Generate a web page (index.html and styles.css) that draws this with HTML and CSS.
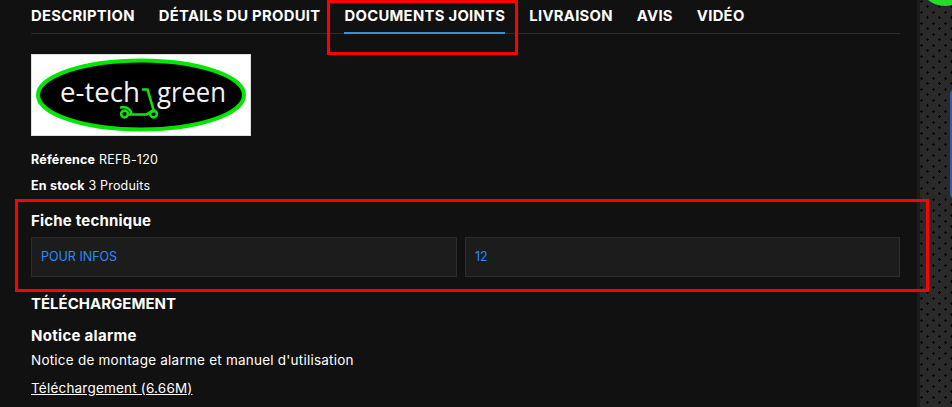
FILE: index.html

```html
<!DOCTYPE html>
<html lang="fr">
<head>
    <meta charset="UTF-8">
    <meta name="viewport" content="width=device-width, initial-scale=1.0">
    <title>Documents joints</title>
    <link rel="stylesheet" href="styles.css">
</head>
<body>
    <div id="page">
        <div id="product">
            <!-- Onglets -->
            <div class="tabs">
                <a class="tab">DESCRIPTION</a>
                <a class="tab">DÉTAILS DU PRODUIT</a>
                <a class="tab active">DOCUMENTS JOINTS</a>
                <a class="tab">LIVRAISON</a>
                <a class="tab">AVIS</a>
                <a class="tab">VIDÉO</a>
            </div>

            <!-- Logo marque -->
            <svg class="logo" viewBox="0 0 220 82" role="img" aria-label="e-tech green">
                <rect x="0.5" y="0.5" width="219" height="81" fill="#fff" stroke="#ddd"/>
                <ellipse cx="110" cy="41" rx="103" ry="34.5" fill="#000" stroke="#00e600" stroke-width="4"/>
                <text x="29" y="48" class="logo-text" textLength="80" lengthAdjust="spacingAndGlyphs">e-tech</text>
                <text x="126" y="48" class="logo-text" textLength="69" lengthAdjust="spacingAndGlyphs">green</text>
                <g fill="none" stroke="#14e014" stroke-width="2.6" stroke-linecap="round">
                    <path d="M112 35.5h4.5l6.5 22"/>
                    <path d="M97 60.5h18.5l7-4"/>
                    <circle cx="122.5" cy="60" r="3.4"/>
                    <circle cx="93.5" cy="60" r="3.4"/>
                    <path d="M90 53.5c5-1.5 10 2 10.5 6.5"/>
                </g>
            </svg>

            <div class="info"><b>Référence</b> REFB-120</div>
            <div class="info"><b>En stock</b> 3 Produits</div>

            <!-- Fiche technique -->
            <h3 class="sheet-title">Fiche technique</h3>
            <div class="sheet">
                <div class="sheet-cell">POUR INFOS</div>
                <div class="sheet-cell">12</div>
            </div>

            <!-- Téléchargement -->
            <h2 class="download-title">TÉLÉCHARGEMENT</h2>
            <h3 class="notice-title">Notice alarme</h3>
            <p class="notice-text">Notice de montage alarme et manuel d'utilisation</p>
            <a class="download-link">Téléchargement (6.66M)</a>
        </div>

        <div id="side">
            <span class="side-badge"></span>
            <span class="side-tab"></span>
        </div>

        <!-- Cadres rouges d'annotation -->
        <div class="mark mark-tab"></div>
        <div class="mark mark-sheet"></div>
    </div>
</body>
</html>
```

FILE: styles.css

```css
/* Page */
html, body {
    margin: 0;
    padding: 0;
    height: 100%;
    overflow: hidden;
    background-color: #111;
}

#page {
    position: relative;
    display: flex;
    height: 407px;
    font-family: Inter, "Liberation Sans", sans-serif;
    color: #fff;
}

#product {
    width: 869px;
    padding: 0 17px 0 31px;
    background-color: #111;
    overflow: hidden;
}

/* Onglets */
.tabs {
    display: flex;
    gap: 24px;
    height: 33px;
    border-bottom: 1px solid #2d2d2d;
}

.tab {
    margin-bottom: -1px;
    font-size: 14.8px;
    font-weight: 700;
    letter-spacing: 0.3px;
    line-height: 33px;
    white-space: nowrap;
}

.tab.active {
    border-bottom: 2px solid #3a8fd6;
    height: 32px;
}

/* Logo */
.logo {
    display: block;
    width: 220px;
    height: 82px;
    margin-top: 20px;
}

.logo-text {
    font-family: "Open Sans", sans-serif;
    font-size: 27px;
    fill: #f2f2f2;
}

.info {
    margin-top: 8px;
    font-size: 12.5px;
    letter-spacing: 0.2px;
    line-height: 18px;
}

.logo + .info {
    margin-top: 15px;
}

.info b {
    font-weight: 700;
}

/* Fiche technique */
.sheet-title {
    margin: 16px 0 0;
    font-size: 15px;
    font-weight: 700;
    letter-spacing: 0.2px;
    line-height: 20px;
}

.sheet {
    display: grid;
    grid-template-columns: 426px 1fr;
    gap: 8px;
    margin-top: 6px;
}

.sheet-cell {
    height: 38px;
    padding: 0 9px;
    background-color: #1c1c1c;
    border: 1px solid #2d2d2d;
    color: #2b8aff;
    font-size: 12.5px;
    line-height: 38px;
}

/* Téléchargement */
.download-title {
    margin: 17px 0 0;
    font-size: 15px;
    font-weight: 700;
    line-height: 20px;
}

.notice-title {
    margin: 12px 0 0;
    font-size: 15px;
    font-weight: 700;
    letter-spacing: 0.3px;
    line-height: 20px;
}

.notice-text {
    margin: 5px 0 0;
    font-size: 13.5px;
    letter-spacing: 0.23px;
    line-height: 18px;
}

.download-link {
    display: inline-block;
    margin-top: 10px;
    font-size: 13.5px;
    letter-spacing: 0.2px;
    line-height: 18px;
    text-decoration: underline;
}

/* Panneau droit */
#side {
    position: relative;
    flex: 1;
    overflow: hidden;
    background-color: #2a2a2a;
    background-image:
        linear-gradient(to right, #1c1c1c 3px, transparent 3px),
        url("data:image/svg+xml,%3Csvg xmlns='http://www.w3.org/2000/svg' width='12' height='11'%3E%3Cpath fill='%23050505' d='M1 0h1v1h1v1H2v1H1V2H0V1h1zM7 5h1v1h1v1H8v1H7V7H6V6h1z'/%3E%3C/svg%3E");
    background-position: 0 0, 3px 0;
}

.side-badge {
    position: absolute;
    top: -48px;
    left: 1px;
    width: 54px;
    height: 54px;
    border-radius: 50%;
    background-color: #22e02a;
}

.side-tab {
    position: absolute;
    top: 90px;
    left: 33px;
    width: 10px;
    height: 108px;
    border-radius: 4px;
    background-color: #3b5a9e;
}

/* Annotations */
.mark {
    position: absolute;
    border: 3px solid #f00;
}

.mark-tab {
    left: 327px;
    top: 0;
    width: 185px;
    height: 49px;
}

.mark-sheet {
    left: 15px;
    top: 199px;
    width: 908px;
    height: 87px;
}
```
